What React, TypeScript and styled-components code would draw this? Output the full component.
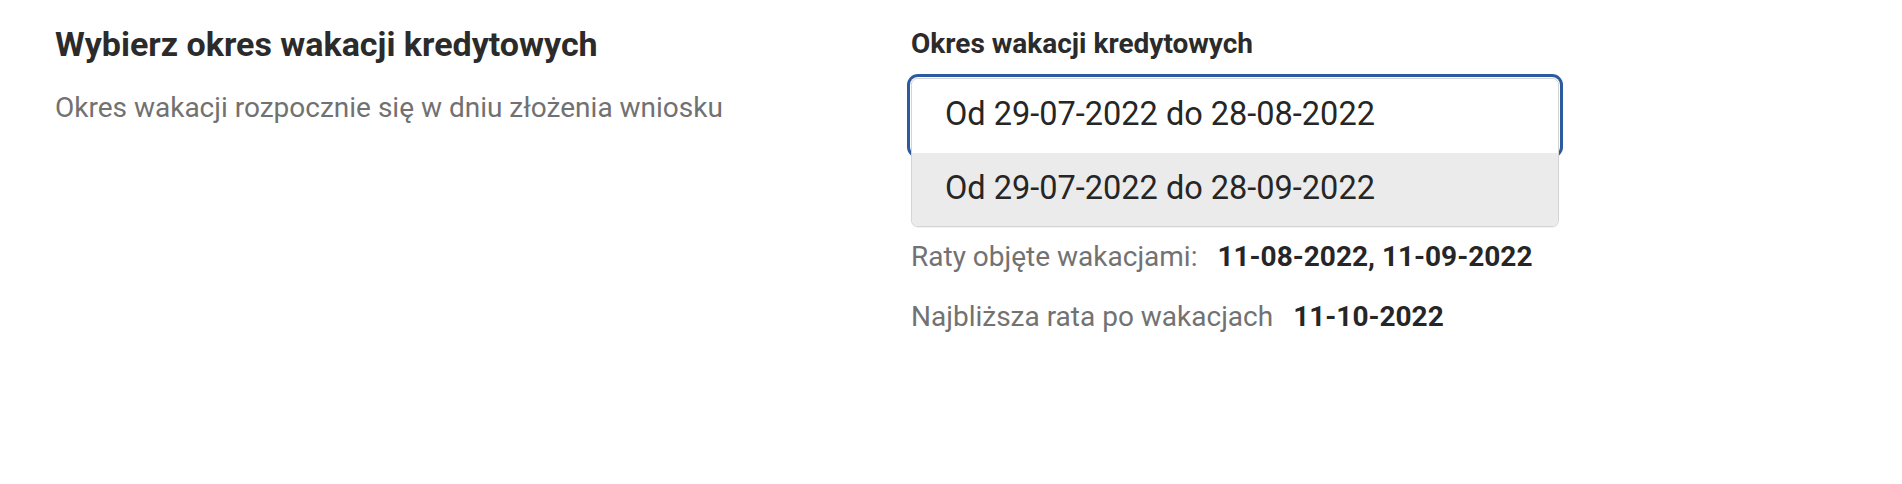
import { createGlobalStyle } from "styled-components";
import styled from "styled-components";

const GlobalStyle = createGlobalStyle`
  body {
    margin: 0;
    background: #ffffff;
    font-family: Roboto, "Noto Sans", "Liberation Sans", sans-serif;
    color: #2a2a2a;
  }
`;

const Page = styled.div`
  display: grid;
  grid-template-columns: 856px 648px;
  padding: 24px 55px 0;
  min-height: 460px;
`;

const Intro = styled.div`
  display: flex;
  flex-direction: column;
`;

const Title = styled.h2`
  margin: 0;
  font-size: 34px;
  line-height: 40px;
  font-weight: 700;
  color: #2b2b2b;
`;

const Subtitle = styled.p`
  margin: 27px 0 0;
  font-size: 28px;
  line-height: 34px;
  color: #717171;
`;

const Field = styled.div`
  display: flex;
  flex-direction: column;
  padding-top: 3px;
`;

const Label = styled.label`
  font-size: 28px;
  line-height: 34px;
  font-weight: 700;
  color: #2b2b2b;
`;

const SelectBox = styled.div`
  position: relative;
  box-sizing: border-box;
  margin-top: 17px;
  height: 76px;
  border: 1px solid #d4d4d4;
  border-radius: 7px;
  background: #fff;
  box-shadow: 0 0 0 1px #fff, 0 0 0 4px #2c5aa0;
`;

const Menu = styled.ul`
  position: absolute;
  top: -1px;
  left: -1px;
  right: -1px;
  margin: 0;
  padding: 0;
  list-style: none;
  border: 1px solid #d4d4d4;
  border-radius: 7px;
  overflow: hidden;
  background: #fff;
  box-shadow: 0 1px 1px rgba(0, 0, 0, 0.06);
  z-index: 2;
`;

const Option = styled.li<{ $active?: boolean }>`
  display: flex;
  align-items: center;
  box-sizing: border-box;
  height: ${(p) => (p.$active ? 73 : 74)}px;
  padding: 0 0 4px 33px;
  font-size: 32.5px;
  color: #262626;
  background: ${(p) => (p.$active ? "#ebebeb" : "#ffffff")};
`;

const Info = styled.div`
  display: flex;
  flex-direction: column;
  gap: 26px;
  margin-top: 86px;
`;

const Row = styled.div`
  font-size: 28px;
  line-height: 34px;
  color: #727272;
`;

const Value = styled.strong`
  margin-left: 20px;
  font-weight: 700;
  color: #262626;
`;

const options = ["Od 29-07-2022 do 28-08-2022", "Od 29-07-2022 do 28-09-2022"];

export default function App() {
  return (
    <>
      <GlobalStyle />
      <Page>
        <Intro>
          <Title>Wybierz okres wakacji kredytowych</Title>
          <Subtitle>Okres wakacji rozpocznie się w dniu złożenia wniosku</Subtitle>
        </Intro>
        <Field>
          <Label>Okres wakacji kredytowych</Label>
          <SelectBox>
            <Menu>
              {options.map((o, i) => (
                <Option key={o} $active={i === 1}>
                  {o}
                </Option>
              ))}
            </Menu>
          </SelectBox>
          <Info>
            <Row>
              Raty objęte wakacjami:<Value>11-08-2022, 11-09-2022</Value>
            </Row>
            <Row>
              Najbliższa rata po wakacjach<Value>11-10-2022</Value>
            </Row>
          </Info>
        </Field>
      </Page>
    </>
  );
}
